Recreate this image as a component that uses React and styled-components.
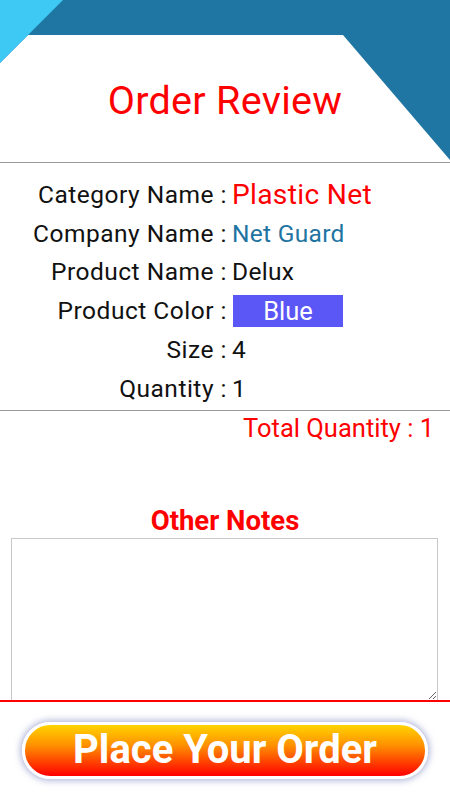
import React from "react";
import styled, { createGlobalStyle } from "styled-components";

const Global = createGlobalStyle`
  html, body { margin: 0; padding: 0; background: #fff; }
  body { font-family: Roboto, "Noto Sans", Arial, sans-serif; width: 450px; height: 800px; overflow: hidden; }
  * { box-sizing: border-box; }
`;

const Page = styled.div`
  width: 450px;
  height: 800px;
  display: flex;
  flex-direction: column;
  background: #fff;
`;

const Header = styled.header`
  position: relative;
  height: 163px;
  border-bottom: 1px solid #9a9a9a;
  display: flex;
  align-items: center;
  justify-content: center;
  padding-top: 40px;
`;

const HeaderArt = styled.svg`
  position: absolute;
  inset: 0;
  width: 450px;
  height: 162px;
  display: block;
`;

const Title = styled.h1`
  position: relative;
  margin: 0;
  font-weight: 400;
  font-size: 39.5px;
  line-height: 46px;
  letter-spacing: 0.3px;
  color: #ff0000;
`;

const Details = styled.section`
  display: flex;
  flex-direction: column;
  padding: 12px 0 2px;
  border-bottom: 1px solid #9a9a9a;
`;

const Row = styled.div`
  display: grid;
  grid-template-columns: 232px 1fr;
  align-items: center;
  height: 38.8px;
`;

const Label = styled.span`
  text-align: right;
  font-size: 24.5px;
  letter-spacing: 0.5px;
  color: #111;
  padding-right: 5px;
  white-space: nowrap;
`;

const Value = styled.span`
  font-size: ${(p) => p.$size || 24.5}px;
  letter-spacing: 0.3px;
  color: ${(p) => p.$color || "#111"};
  white-space: nowrap;
`;

const ColorChip = styled.span`
  display: inline-flex;
  align-items: center;
  justify-content: center;
  width: 110px;
  height: 32px;
  margin-left: 1px;
  background: #5b56f6;
  color: #fff;
  font-size: 25.5px;
`;

const Total = styled.div`
  text-align: right;
  padding: 2px 16px 0 0;
  font-size: 25.5px;
  line-height: 30px;
  color: #ff0000;
`;

const NotesTitle = styled.h2`
  margin: 62px 0 1px;
  text-align: center;
  font-size: 27.5px;
  line-height: 32px;
  font-weight: 700;
  color: #ff0000;
`;

const Notes = styled.textarea`
  display: block;
  margin: 0 12px 0 11px;
  width: 427px;
  height: 163px;
  border: 1px solid #c8c8c8;
  resize: both;
  font-family: inherit;
  font-size: 18px;
  outline: none;
`;

const Footer = styled.footer`
  position: relative;
  margin-top: -1px;
  border-top: 2px solid #ff0000;
  flex: 1;
  display: flex;
  justify-content: center;
  padding-top: 20px;
  background: #fff;
`;

const OrderButton = styled.button`
  width: 406px;
  height: 57px;
  border-radius: 29px;
  border: 3px solid #fff;
  background: linear-gradient(to bottom, #ffd400 0%, #ff9000 40%, #ff0000 100%);
  box-shadow: 0 0 6px 2px rgba(120, 130, 190, 0.55);
  color: #fff;
  font-family: Roboto, Arial, sans-serif;
  font-weight: 700;
  font-size: 40px;
  line-height: 1;
  padding: 0;
  cursor: pointer;
`;

const rows = [
  { label: "Category Name", value: "Plastic Net", color: "#ff0000", size: 28.2 },
  { label: "Company Name", value: "Net Guard", color: "#1f74a2" },
  { label: "Product Name", value: "Delux" },
  { label: "Product Color", chip: "Blue" },
  { label: "Size", value: "4" },
  { label: "Quantity", value: "1" },
];

export default function App() {
  return (
    <Page>
      <Global />
      <Header>
        <HeaderArt viewBox="0 0 450 162" preserveAspectRatio="none">
          <rect x="0" y="0" width="450" height="162" fill="#1f76a3" />
          <polygon points="0,63 28,35 343,35 450,160 450,162 0,162" fill="#ffffff" />
          <polygon points="0,0 63,0 0,63" fill="#3ec8f4" />
        </HeaderArt>
        <Title>Order Review</Title>
      </Header>
      <Details>
        {rows.map((r) => (
          <Row key={r.label}>
            <Label>{r.label} :</Label>
            {r.chip ? (
              <div>
                <ColorChip>{r.chip}</ColorChip>
              </div>
            ) : (
              <Value $color={r.color} $size={r.size}>{r.value}</Value>
            )}
          </Row>
        ))}
      </Details>
      <Total>Total Quantity : 1</Total>
      <NotesTitle>Other Notes</NotesTitle>
      <Notes />
      <Footer>
        <OrderButton>Place Your Order</OrderButton>
      </Footer>
    </Page>
  );
}
